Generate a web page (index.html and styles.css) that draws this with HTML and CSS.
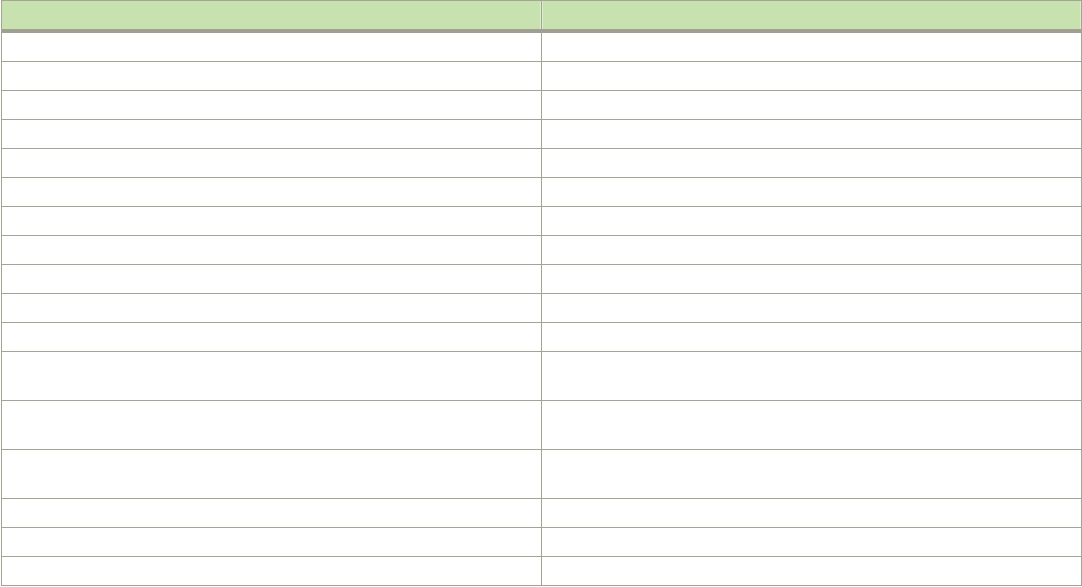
FILE: index.html
```html
<!DOCTYPE html>
<html lang="en">
<head>
<meta charset="utf-8">
<title>Table</title>
<link rel="stylesheet" href="styles.css">
</head>
<body>
<div class="page">
<table class="grid">
  <thead>
    <tr><th class="c1"></th><th class="c2"></th></tr>
  </thead>
  <tbody>
    <tr><td></td><td></td></tr>
    <tr><td></td><td></td></tr>
    <tr><td></td><td></td></tr>
    <tr><td></td><td></td></tr>
    <tr><td></td><td></td></tr>
    <tr><td></td><td></td></tr>
    <tr><td></td><td></td></tr>
    <tr><td></td><td></td></tr>
    <tr><td></td><td></td></tr>
    <tr><td></td><td></td></tr>
    <tr><td></td><td></td></tr>
    <tr class="tall"><td></td><td></td></tr>
    <tr class="tall"><td></td><td></td></tr>
    <tr class="tall"><td></td><td></td></tr>
    <tr><td></td><td></td></tr>
    <tr><td></td><td></td></tr>
    <tr><td></td><td></td></tr>
  </tbody>
</table>
</div>
</body>
</html>
```

FILE: styles.css
```css
html, body {
  margin: 0;
  padding: 0;
  background: #ffffff;
  font-family: "Liberation Sans", Arial, sans-serif;
  font-size: 12px;
}

.page {
  padding-left: 1px;
}

.grid {
  border-collapse: separate;
  border-spacing: 0;
  table-layout: fixed;
  width: 1081px;
  border-top: 1px solid #a3a396;
  border-left: 1px solid #a3a396;
}

.grid th,
.grid td {
  padding: 0;
  border-right: 1px solid #a3a396;
  box-sizing: content-box;
}

.grid th {
  height: 28px;
  background: #c7e2ae;
  border-bottom: 4px solid #a0a092;
}

.grid th.c1 {
  width: 539px;
  box-shadow: inset -1px 0 0 #dcedca;
}

.grid th.c2 {
  box-shadow: inset 1px 0 0 #dcedca, inset -1px 0 0 #dcedca;
}

.grid td {
  height: 28px;
  border-bottom: 1px solid #a3a396;
}

.grid tr.tall td {
  height: 48px;
}
```
